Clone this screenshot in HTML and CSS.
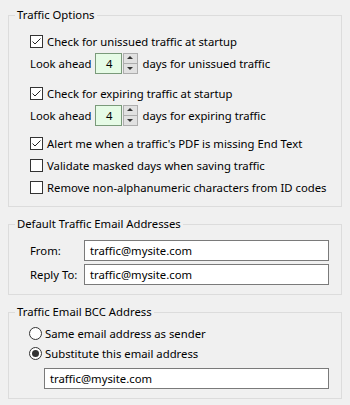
FILE: index.html
```html
<!DOCTYPE html>
<html>
<head>
<meta charset="utf-8">
<link rel="stylesheet" href="styles.css">
</head>
<body>
<div class="page">
  <fieldset class="group">
    <legend>Traffic Options</legend>
    <div class="inner g1">
      <label class="row cb-row"><span class="cb checked"><svg viewBox="0 0 13 13" width="13" height="13"><path d="M2.5 6.5 L5 9 L10.5 3.5" fill="none" stroke="#222" stroke-width="1"/></svg></span>Check for unissued traffic at startup</label>
      <div class="row look"><span>Look ahead</span><span class="spin"><span class="num">4</span><span class="arrows"><span class="up"></span><span class="down"></span></span></span><span>days for unissued traffic</span></div>
      <label class="row cb-row sep"><span class="cb checked"><svg viewBox="0 0 13 13" width="13" height="13"><path d="M2.5 6.5 L5 9 L10.5 3.5" fill="none" stroke="#222" stroke-width="1"/></svg></span>Check for expiring traffic at startup</label>
      <div class="row look"><span>Look ahead</span><span class="spin"><span class="num">4</span><span class="arrows"><span class="up"></span><span class="down"></span></span></span><span>days for expiring traffic</span></div>
      <label class="row cb-row sep2"><span class="cb checked"><svg viewBox="0 0 13 13" width="13" height="13"><path d="M2.5 6.5 L5 9 L10.5 3.5" fill="none" stroke="#222" stroke-width="1"/></svg></span>Alert me when a traffic's PDF is missing End Text</label>
      <label class="row cb-row"><span class="cb"></span>Validate masked days when saving traffic</label>
      <label class="row cb-row"><span class="cb"></span>Remove non-alphanumeric characters from ID codes</label>
    </div>
  </fieldset>

  <fieldset class="group gap">
    <legend>Default Traffic Email Addresses</legend>
    <div class="inner g2">
      <div class="row field"><span class="lbl">From:</span><span class="text">traffic@mysite.com</span></div>
      <div class="row field"><span class="lbl">Reply To:</span><span class="text">traffic@mysite.com</span></div>
    </div>
  </fieldset>

  <fieldset class="group gap">
    <legend>Traffic Email BCC Address</legend>
    <div class="inner g3">
      <label class="row rb-row"><span class="rb"></span>Same email address as sender</label>
      <label class="row rb-row"><span class="rb on"></span>Substitute this email address</label>
      <div class="row bcc"><span class="text">traffic@mysite.com</span></div>
    </div>
  </fieldset>
</div>
</body>
</html>
```
FILE: styles.css
```css
html, body {
  margin: 0;
  padding: 0;
  background: #f0f0f0;
}
body {
  font-family: "Noto Sans", "Liberation Sans", sans-serif;
  font-size: 11.3px;
  color: #000;
  width: 350px;
  height: 405px;
  overflow: hidden;
}
.page {
  padding: 7px 0 0 8px;
  display: flex;
  flex-direction: column;
}
.group {
  margin: 0;
  width: 334px;
  box-sizing: border-box;
  border: 1px solid #dcdcdc;
  padding: 0;
}
.group.gap { margin-top: 9px; }
.group legend {
  margin-left: 6px;
  padding: 0 2px;
  line-height: 16px;
  height: 16px;
}
.inner {
  display: flex;
  flex-direction: column;
}
.g1 { padding: 7px 0 8px 21px; }
.g2 { padding: 8px 0 9px 21px; }
.g3 { padding: 3px 0 9px 20px; }

.row {
  display: flex;
  align-items: center;
  white-space: nowrap;
}
.cb-row { height: 22px; }
.sep { margin-top: 8px; }
.sep2 { margin-top: 6px; }

.cb {
  width: 13px;
  height: 13px;
  box-sizing: border-box;
  border: 1px solid #333;
  background: #fff;
  margin-right: 4px;
  position: relative;
  flex: none;
}
.cb svg {
  position: absolute;
  left: -1px;
  top: -1px;
}

.look { height: 22px; }
.spin {
  display: flex;
  margin: 0 5px 0 3px;
}
.num {
  width: 27px;
  height: 21px;
  box-sizing: border-box;
  border: 1px solid #7a9a7a;
  background: #e6fbe6;
  text-align: right;
  padding-right: 8px;
  line-height: 19px;
}
.arrows {
  display: flex;
  flex-direction: column;
  width: 15px;
  margin-left: 1px;
  height: 21px;
}
.arrows span {
  flex: 1;
  background: #e1e1e1;
  border: 1px solid #adadad;
  position: relative;
}
.arrows .down { margin-top: -1px; }
.arrows .up::after, .arrows .down::after {
  content: "";
  position: absolute;
  left: 50%;
  top: 50%;
  margin-left: -3px;
  border-left: 3px solid transparent;
  border-right: 3px solid transparent;
}
.arrows .up::after {
  margin-top: -2px;
  border-bottom: 3px solid #333;
}
.arrows .down::after {
  margin-top: -1px;
  border-top: 3px solid #333;
}

.field { height: 21px; }
.field + .field { margin-top: 3px; }
.lbl { width: 54px; }
.text {
  height: 21px;
  box-sizing: border-box;
  border: 1px solid #7a7a7a;
  background: #fff;
  padding-left: 5px;
  line-height: 19px;
  flex: none;
}
.field .text { width: 245px; }

.rb-row { height: 20px; }
.rb {
  width: 13px;
  height: 13px;
  box-sizing: border-box;
  border: 1px solid #333;
  border-radius: 50%;
  background: #fff;
  margin-right: 3px;
  position: relative;
  flex: none;
}
.rb.on::after {
  content: "";
  position: absolute;
  left: 2px;
  top: 2px;
  width: 7px;
  height: 7px;
  border-radius: 50%;
  background: #333;
}
.bcc { margin-top: 5px; padding-left: 15px; }
.bcc .text { width: 285px; }
```
